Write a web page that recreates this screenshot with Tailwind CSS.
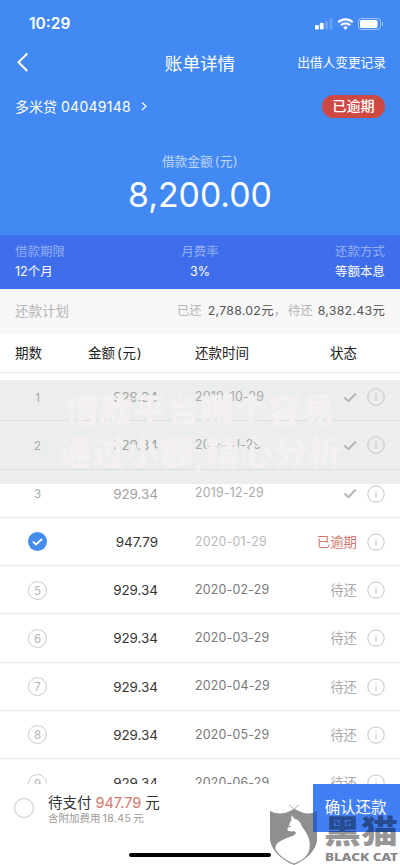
<!DOCTYPE html>
<html lang="zh-CN">
<head>
<meta charset="utf-8">
<meta name="viewport" content="width=device-width, initial-scale=1">
<title>账单详情</title>
<script src="https://cdn.jsdelivr.net/npm/@tailwindcss/browser@4"></script>
</head>
<body class="bg-white">
<div class="relative flex h-[865px] w-[400px] flex-col overflow-hidden bg-white font-['Inter','Noto_Sans_CJK_SC',sans-serif] whitespace-nowrap">
  <header class="h-[235px] shrink-0 bg-[#4289f3] text-white">
    <div class="flex h-[47px] items-end justify-between pr-[16px] pl-[29px]">
      <span class="h-[32px] text-[15.5px] leading-[18px] font-semibold">10:29</span>
      <svg class="mb-[15px] h-[16px] w-[70px]" viewBox="0 0 70 16" fill="none">
        <rect x="1" y="9" width="3.800" height="4.500" rx="1" fill="#fff"/>
        <rect x="5.800" y="7" width="3.800" height="6.500" rx="1" fill="#fff"/>
        <rect x="10.700" y="5" width="3.300" height="8.500" rx="1" fill="#fff" opacity=".2"/>
        <rect x="15.300" y="2.500" width="3.300" height="11" rx="1" fill="#fff" opacity=".2"/>
        <path d="M24.300 6.300a10.500 10.500 0 0 1 14.400 0M26.900 9.200a6.800 6.800 0 0 1 9.200 0" stroke="#fff" stroke-width="2.200"/>
        <path d="M29.200 11.300a3.400 3.400 0 0 1 4.600 0l-2.300 2.700z" fill="#fff"/>
        <rect x="44.500" y="2.500" width="22" height="11" rx="3" stroke="#fff" stroke-opacity=".5"/>
        <rect x="46" y="4" width="17.500" height="8" rx="1.500" fill="#fff"/>
        <path d="M68 6v4q1-.5 1-2t-1-2" fill="#fff" opacity=".6"/>
      </svg>
    </div>
    <div class="grid h-[32px] grid-cols-[1fr_auto_1fr] items-center px-[14px]">
      <svg class="h-[22px] w-[16px]" viewBox="0 0 16 22" fill="none"><path d="M13.300 1.500 4.500 10.300 13.300 19" stroke="#fff" stroke-width="2"/></svg>
      <h1 class="pt-[2px] text-[17.6px] font-normal">账单详情</h1>
      <span class="justify-self-end text-[12.7px]">出借人变更记录</span>
    </div>
    <div class="flex h-[54px] items-center justify-between pr-[15px] pl-[15px]">
      <span class="flex items-center text-[14px]"><span>多米贷</span><span class="ml-[4px] tracking-[.25px]">04049148</span>
        <svg class="ml-[10px] h-[10px] w-[7px]" viewBox="0 0 7 10" fill="none"><path d="m1 1.500 4 3.700-4 3.800" stroke="#fff" stroke-width="1.200"/></svg></span>
      <span class="flex h-[23px] w-[63px] items-center justify-center rounded-full bg-[#cf4944] text-[14.2px] font-medium">已逾期</span>
    </div>
    <div class="flex flex-col items-center pt-[20px]">
      <span class="text-[12.7px] leading-[18px] text-white/65">借款金额<span class="ml-[2px] tracking-[.5px]">(元)</span></span>
      <strong class="mt-[3px] text-[33.8px] leading-[42px] font-normal">8,200.00</strong>
    </div>
  </header>

  <section class="grid h-[54px] shrink-0 grid-cols-3 bg-[#3f6eec] px-[15px] pt-[7px] text-[12.5px] leading-[20px] text-white">
    <div><p class="text-white/45">借款期限</p><p>12个月</p></div>
    <div class="text-center"><p class="text-white/45">月费率</p><p>3%</p></div>
    <div class="text-right"><p class="text-white/45">还款方式</p><p>等额本息</p></div>
  </section>

  <section class="flex h-[45px] shrink-0 items-center justify-between bg-[#f7f7f7] px-[15px] text-[#b5b5b5]">
    <span class="text-[13.5px]">还款计划</span>
    <span class="text-[12.3px]">已还<span class="ml-[6px] tracking-[.3px] text-[#555]">2,788.02元</span><span class="mr-[2px]">，</span>待还<span class="ml-[5px] tracking-[.3px] text-[#555]">8,382.43元</span></span>
  </section>

  <section class="relative shrink-0">
    <div class="absolute top-[46px] left-0 h-[104px] w-full bg-[#ebeeec]"></div>
    <div class="relative grid h-[39px] grid-cols-[88px_107px_135px_1fr] items-center border-b border-[#ececec] text-[13.5px] text-[#222]">
      <span class="pl-[15px]">期数</span><span>金额<span class="ml-[2px] tracking-[.7px]">(元)</span></span><span>还款时间</span><span>状态</span>
    </div>
    <div id="rows" class="relative"></div>
    <div class="absolute top-[56px] left-0 flex w-full flex-col items-center text-[33.8px] leading-[42px] font-black text-[#f3f0ef]">
      <span>借款平台哪个容易</span><span class="mr-[1px]">通过小额,精心分析</span>
    </div>
  </section>

  <footer class="absolute top-[784px] left-0 flex h-[81px] w-full items-start bg-white">
    <span class="mt-[14px] ml-[14px] h-[20px] w-[20px] rounded-full border border-[#c4c4c4]"></span>
    <div class="ml-[14px] pt-[9px]">
      <p class="text-[14.5px] leading-[20px] text-[#333]">待支付<span class="mx-[4px] text-[#d3776e]">947.79</span>元</p>
      <p class="text-[10.5px] leading-[11px] text-[#999]">含附加费用<span class="mx-[2px] tracking-[.4px]">18.45</span>元</p>
    </div>
    <button class="ml-auto h-[48px] w-[87px] bg-[#427ff4] pr-[2px] text-[15.4px] text-white">确认还款</button>
    <span class="absolute top-[68.500px] left-[129px] h-[4.500px] w-[142px] rounded-full bg-black"></span>
    <svg class="absolute top-[20px] left-[268px] h-[61px] w-[132px]" viewBox="268 804 132 61">
      <path d="m289 805 10 8m0-8-10 8" stroke="#c6c6c6" stroke-width="1.200" fill="none"/>
      <path d="M270 811q10 5 20 0 4-2 4-2 3 1 5 2 9 5 18 0v30q-3 15-23 24-21-9-24-25z" fill="#8f8f8f"/>
      <path d="M313 812.300q2-.4 4-1.300v21h-4z" fill="#3463bb"/>
      <path d="M291.500 815.500q2 1.500 2.800 3.300 4.200.7 6.200 4.200 1.300 4 4.500 8 6 8 4.500 18-1 5.500-6 9.500-4 3-9.500 5-13-5-18.500-14-1-5 5-8.500 5-3 10.500-4.500 4.500-1.500 5-4-.6-1.500-3-1.300-3 .3-4.800-.2-1-1-.7-2.500 1-1 1.500-3 .5-2.500 2.500-5.500-.5-2.500 0-4.500z" fill="#fff"/>
      <path d="M288.700 827.300q1-1.300 2.300-.8" stroke="#777" stroke-width="1" fill="none"/>
      <g fill="#000" fill-opacity=".42" stroke="#000" stroke-opacity="0" font-family="'Noto Sans CJK SC',sans-serif" font-weight="900">
        <text transform="translate(324 842.500) scale(1 .85)" font-size="37">黑猫</text>
      </g>
      <text x="325" y="861" font-family="'Noto Sans',sans-serif" font-weight="800" font-size="11" fill="#858585" textLength="73" lengthAdjust="spacingAndGlyphs">BLACK CAT</text>
    </svg>
  </footer>
</div>
<script>
const info = '<svg class="h-[18px] w-[18px]" viewBox="0 0 18 18" fill="none" stroke="#bcbcbc"><circle cx="9" cy="9" r="8.200" stroke-width=".9"/><path d="M9 7.500v5.500M9 4.700v1.200" stroke-width="1"/></svg>';
const tick = '<svg class="h-[11px] w-[14px]" viewBox="0 0 14 11" fill="none"><path d="m1.500 5.500 4 3.700L12.800 1.500" stroke="#b3b5b4" stroke-width="2"/></svg>';
const checked = '<span class="flex h-[19px] w-[19px] items-center justify-center rounded-full bg-[#438cee]"><svg class="h-[8px] w-[11px]" viewBox="0 0 11 8" fill="none"><path d="m1 3.500 3 3 6-5.500" stroke="#fff" stroke-width="1.800"/></svg></span>';
const dates = ['2019-10-29','2019-11-29','2019-12-29','2020-01-29','2020-02-29','2020-03-29','2020-04-29','2020-05-29','2020-06-29'];
document.getElementById('rows').innerHTML = dates.map((date, i) => {
  const n = i + 1, paid = n < 4, due = n === 4;
  const num = paid ? `<span class="pt-[2px] text-[11.5px] text-[#aaa]">${n}</span>`
    : due ? checked
    : `<span class="flex h-[19px] w-[19px] items-center justify-center rounded-full border border-[#cacaca] pt-[2px] text-[11.5px] text-[#b5b5b5]">${n}</span>`;
  const state = paid ? tick : due ? '<span class="text-[#d3776e]">已逾期</span>' : '<span class="text-[#aaa]">待还</span>';
  return `<div class="grid h-[48.25px] grid-cols-[75px_83px_37px_85px_77px_1fr] items-center border-b pt-[1px] text-[13.4px] ${n < 3 ? 'border-[#dcdfdd]' : 'border-[#ebebeb]'}">
    <span class="flex justify-center">${num}</span>
    <span class="text-right ${paid ? 'text-[#a0a0a0]' : 'text-[#333]'}">${due ? '947.79' : '929.34'}</span><span></span>
    <span class="text-[12.4px] tracking-[.2px] ${paid ? 'text-[#aaa]' : due ? 'text-[#b8b8b8]' : 'text-[#777]'}">${date}</span>
    <span class="flex justify-end">${state}</span>
    <span class="flex pl-[10px]">${info}</span>
  </div>`;
}).join('');
</script>
</body>
</html>
